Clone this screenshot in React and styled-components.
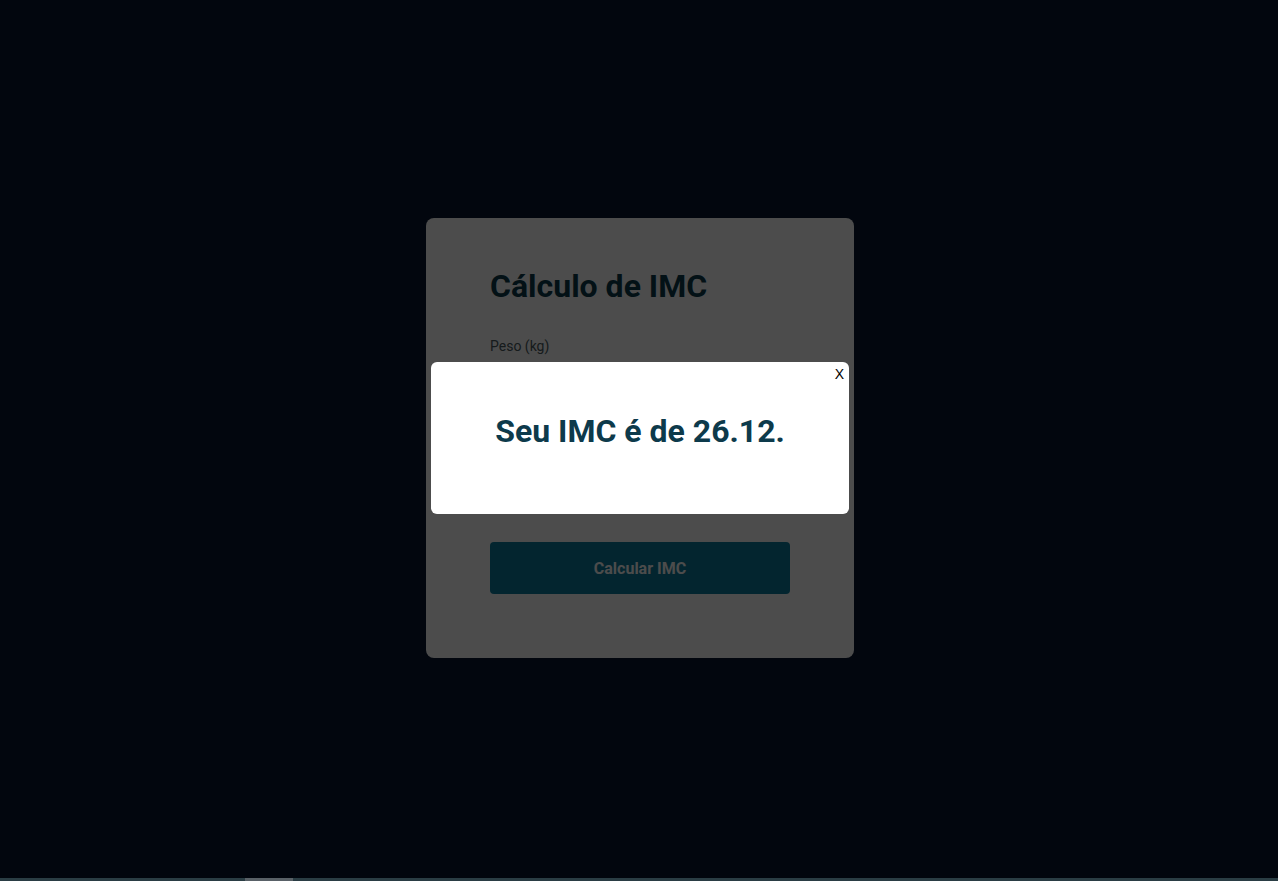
import React, { useState } from 'react'
import styled, { createGlobalStyle } from 'styled-components'

const GlobalStyle = createGlobalStyle`
    * {
        box-sizing: border-box;
    }
    body {
        margin: 0;
        background: #07142f;
        font-family: Roboto, 'Noto Sans', Arial, sans-serif;
    }
`

const Page = styled.div`
    display: flex;
    flex-direction: column;
    height: 881px;
`

const Main = styled.main`
    flex: 1;
    display: flex;
    align-items: center;
    justify-content: center;
    padding: 0 0 2px 2px;
`

const Card = styled.form`
    width: 428px;
    height: 440px;
    background: #ffffff;
    border-radius: 8px;
    padding: 48px 64px;
    display: flex;
    flex-direction: column;
`

const Title = styled.h1`
    font-size: 32px;
    font-weight: 700;
    color: #0b3a4a;
    margin: 0 0 32px;
    line-height: 40px;
`

const Label = styled.label`
    font-size: 14px;
    color: #4a5a60;
    line-height: 16px;
    margin-bottom: 8px;
`

const Input = styled.input`
    height: 40px;
    border: 1px solid #c9d2d6;
    border-radius: 4px;
    padding: 0 12px;
    margin-bottom: 16px;
    font-family: inherit;
    font-size: 14px;
`

const Button = styled.button`
    margin-top: 44px;
    height: 52px;
    border: none;
    border-radius: 4px;
    background: #0a7c9d;
    color: #ffffff;
    font-family: inherit;
    font-size: 16px;
    font-weight: 700;
    cursor: pointer;
`

const Strip = styled.div`
    height: 3px;
    background: #2a3d44;
    position: relative;
`

const Thumb = styled.div`
    position: absolute;
    left: 245px;
    top: 0;
    width: 48px;
    height: 3px;
    background: #596167;
`

const Overlay = styled.div`
    position: fixed;
    inset: 0 0 3px 0;
    background: rgba(0, 0, 0, 0.7);
    display: flex;
    align-items: center;
    justify-content: center;
    padding-left: 2px;
`

const Modal = styled.div`
    position: relative;
    width: 418px;
    height: 152px;
    background: #ffffff;
    border-radius: 6px;
    display: flex;
    align-items: center;
    justify-content: center;
    padding-bottom: 14px;
    margin-top: -2px;
`

const Result = styled.h2`
    margin: 0;
    font-size: 32px;
    font-weight: 700;
    color: #0d3a4b;
`

const Close = styled.button`
    position: absolute;
    top: 4px;
    right: 3px;
    border: none;
    background: transparent;
    font-family: 'Liberation Sans', Arial, sans-serif;
    font-size: 14px;
    color: #000;
    padding: 0 2px;
    cursor: pointer;
`

export default function App() {
    const [open, setOpen] = useState(true)

    return (
        <>
            <GlobalStyle />
            <Page>
                <Main>
                    <Card onSubmit={(e) => e.preventDefault()}>
                        <Title>Cálculo de IMC</Title>
                        <Label htmlFor="peso">Peso (kg)</Label>
                        <Input id="peso" />
                        <Label htmlFor="altura">Altura (m)</Label>
                        <Input id="altura" />
                        <Button type="submit" onClick={() => setOpen(true)}>Calcular IMC</Button>
                    </Card>
                </Main>
                <Strip>
                    <Thumb />
                </Strip>
            </Page>
            {open && (
                <Overlay>
                    <Modal>
                        <Close onClick={() => setOpen(false)}>X</Close>
                        <Result>Seu IMC é de 26.12.</Result>
                    </Modal>
                </Overlay>
            )}
        </>
    )
}
